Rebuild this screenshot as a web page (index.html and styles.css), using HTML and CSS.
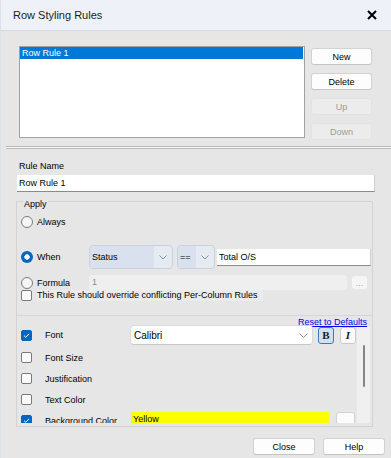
FILE: index.html
```html
<!DOCTYPE html>
<html lang="en">
<head>
  <meta charset="UTF-8">
  <title>Row Styling Rules</title>
  <link rel="stylesheet" href="styles.css">
</head>
<body>

  <div class="dialog">
    <div class="titlebar">
      <span class="title">Row Styling Rules</span>
      <svg class="close-x" width="10" height="10" viewBox="0 0 10 10"><path d="M1 1 L9 9 M9 1 L1 9" stroke="#000" stroke-width="2"/></svg>
    </div>

    <div class="rules-top">
      <div class="rule-list">
        <div class="rule-item selected">Row Rule 1</div>
      </div>
      <div class="rule-buttons">
        <button class="btn">New</button>
        <button class="btn">Delete</button>
        <button class="btn" disabled>Up</button>
        <button class="btn" disabled>Down</button>
      </div>
    </div>

    <div class="splitter"></div>

    <div class="editor">
      <div class="field-label">Rule Name</div>
      <input class="text-input name-input" value="Row Rule 1">

      <div class="group">
        <div class="group-title">Apply</div>

        <div class="apply-row always-row">
          <span class="radio"></span><span class="opt-label">Always</span>
        </div>

        <div class="apply-row when-row">
          <span class="radio checked"></span><span class="opt-label">When</span>
          <div class="combo combo-field">
            <span class="combo-text">Status</span>
            <span class="combo-arrow"><svg width="8" height="5" viewBox="0 0 8 5"><path d="M0.5 0.5 L4 4 L7.5 0.5" stroke="#8793a6" fill="none"/></svg></span>
          </div>
          <div class="combo combo-op">
            <span class="combo-text">==</span>
            <span class="combo-arrow"><svg width="8" height="5" viewBox="0 0 8 5"><path d="M0.5 0.5 L4 4 L7.5 0.5" stroke="#8793a6" fill="none"/></svg></span>
          </div>
          <input class="text-input value-input" value="Total O/S">
        </div>

        <div class="apply-row formula-row">
          <span class="radio"></span><span class="opt-label">Formula</span>
          <div class="formula-input">1</div>
          <button class="ellipsis-btn">...</button>
        </div>

        <div class="apply-row override-row">
          <span class="checkbox"></span>
          <span class="override-label">This Rule should override conflicting Per-Column Rules</span>
        </div>

        <div class="styles-panel">
          <div class="reset-row"><a class="reset-link" href="#">Reset to Defaults</a></div>
          <div class="styles-scroll">
            <div class="style-rows">
              <div class="style-row font-row">
                <span class="checkbox checked"><svg width="9" height="9" viewBox="0 0 9 9"><path d="M2 4.6 L3.8 6.3 L7 2.8" stroke="#fff" fill="none"/></svg></span>
                <span class="style-label">Font</span>
                <div class="font-combo">
                  <span>Calibri</span>
                  <svg width="9" height="5" viewBox="0 0 9 5"><path d="M0.5 0.5 L4.5 4.5 L8.5 0.5" stroke="#9a9a9a" fill="none"/></svg>
                </div>
                <button class="style-btn bold-btn pressed">B</button>
                <button class="style-btn italic-btn">I</button>
              </div>
              <div class="style-row">
                <span class="checkbox"></span>
                <span class="style-label">Font Size</span>
              </div>
              <div class="style-row">
                <span class="checkbox"></span>
                <span class="style-label">Justification</span>
              </div>
              <div class="style-row">
                <span class="checkbox"></span>
                <span class="style-label">Text Color</span>
              </div>
              <div class="style-row">
                <span class="checkbox checked"><svg width="9" height="9" viewBox="0 0 9 9"><path d="M2 4.6 L3.8 6.3 L7 2.8" stroke="#fff" fill="none"/></svg></span>
                <span class="style-label">Background Color</span>
                <div class="color-swatch">Yellow</div>
                <button class="swatch-btn"></button>
              </div>
            </div>
            <div class="scrollbar"><div class="thumb"></div></div>
          </div>
        </div>
      </div>
    </div>

    <div class="footer">
      <button class="btn wide">Close</button>
      <button class="btn wide">Help</button>
    </div>
  </div>

</body>
</html>
```

FILE: styles.css
```css
* {
  box-sizing: border-box;
}

body {
  margin: 0;
  font-family: "Liberation Sans", Arial, sans-serif;
  font-size: 9px;
  color: #000;
  background-color: #e6e6e6;
}

.dialog {
  width: 391px;
  height: 458px;
  background-color: #e6e6e6;
  border-left: 1px solid #dce2ea;
  display: flex;
  flex-direction: column;
}

.titlebar {
  height: 31px;
  flex: none;
  background-color: #eef2f8;
  border-bottom: 1px solid #d5d9df;
  display: flex;
  align-items: center;
  justify-content: space-between;
  padding: 0 14px 0 12px;
}

.title {
  font-size: 11px;
  color: #1b1b1b;
}

/* rule list */

.rules-top {
  display: flex;
  align-items: flex-start;
  padding: 15px 0 0 18px;
}

.rule-list {
  width: 286px;
  height: 92px;
  background-color: #fff;
  border: 1px solid #a2a2a2;
  padding-right: 1px;
}

.rule-item {
  height: 12px;
  line-height: 12px;
  padding-left: 2px;
}

.rule-item.selected {
  background-color: #0078d7;
  color: #fff;
}

.rule-buttons {
  display: flex;
  flex-direction: column;
  gap: 8px;
  margin-left: 6px;
  padding-top: 2px;
}

.btn {
  width: 61px;
  height: 17px;
  padding: 0;
  font-family: inherit;
  font-size: 9px;
  color: #000;
  background-color: #fdfdfd;
  border: 1px solid #d2d2d2;
  border-bottom-color: #c4c4c4;
  border-radius: 3px;
}

.btn:disabled {
  background-color: #ececec;
  border-color: #e2e2e2;
  color: #9c9c9c;
}

.btn.wide {
  width: 62px;
}

.splitter {
  margin: 6px 0 0 5px;
  height: 3px;
  border-top: 1px solid #b9b9b9;
  border-bottom: 1px solid #b9b9b9;
  background-color: #fafafa;
}

/* editor */

.editor {
  display: flex;
  flex-direction: column;
  padding: 0 0 0 15px;
}

.field-label {
  margin: 12px 0 0 3px;
  line-height: 11px;
}

.text-input {
  border: none;
  border-bottom: 1px solid #8a8a8a;
  border-right: 1px solid #cfcfcf;
  background-color: #fff;
  font-family: inherit;
  font-size: 9px;
  color: #000;
  padding: 0 2px;
  outline: none;
}

.name-input {
  margin: 3px 0 0 1px;
  width: 358px;
  height: 17px;
}

.group {
  margin-top: 9px;
  width: 357px;
  border: 1px solid #d3d3d3;
}

.group-title {
  margin: -3px 0 0 6px;
  padding: 0 1px;
  width: fit-content;
  line-height: 10px;
  background-color: #e6e6e6;
}

.apply-row {
  display: flex;
  align-items: center;
}

.always-row {
  height: 16px;
  margin-top: 5px;
}

.when-row {
  height: 24px;
  margin-top: 15px;
}

.formula-row {
  height: 15px;
  margin-top: 6px;
}

.override-row {
  height: 11px;
}

.radio {
  flex: none;
  width: 12px;
  height: 12px;
  margin-left: 4px;
  border: 1px solid #7b7b7b;
  border-radius: 50%;
  background-color: #f6f6f6;
}

.radio.checked {
  border: none;
  background: radial-gradient(circle, #fff 0 2.4px, #0067c0 3px);
}

.opt-label {
  margin-left: 4px;
  width: 52px;
}

.combo {
  display: flex;
  height: 24px;
  border: 1px solid #c8d1df;
  border-radius: 4px;
  background-color: #e6ebf2;
  overflow: hidden;
}

.combo-field {
  width: 84px;
}

.combo-op {
  width: 38px;
  margin-left: 4px;
}

.combo-text {
  flex: 1;
  display: flex;
  align-items: center;
  padding-left: 2px;
  background-color: #d9e1ee;
}

.combo-arrow {
  width: 18px;
  display: flex;
  align-items: center;
  justify-content: center;
}

.value-input {
  margin-left: 2px;
  width: 154px;
  height: 17px;
}

.formula-input {
  width: 258px;
  height: 15px;
  line-height: 15px;
  padding-left: 3px;
  border-radius: 3px;
  background-color: #efefef;
  color: #8c8c8c;
}

.ellipsis-btn {
  margin-left: 4px;
  width: 17px;
  height: 15px;
  padding: 0;
  font-family: inherit;
  font-size: 9px;
  color: #b09a9a;
  background-color: #f5f5f5;
  border: 1px solid #e6e6e6;
  border-radius: 3px;
}

.checkbox {
  flex: none;
  width: 11px;
  height: 11px;
  margin-left: 4px;
  border: 1px solid #7a7a7a;
  border-radius: 2px;
  background-color: #fbfbfb;
  display: flex;
  align-items: center;
  justify-content: center;
}

.checkbox.checked {
  background-color: #0067c0;
  border-color: #0067c0;
}

.override-label {
  margin-left: 5px;
  padding-right: 5px;
  height: 11px;
  line-height: 11px;
  background-color: #ebebeb;
}

/* styling list */

.styles-panel {
  margin-top: 14px;
  border-top: 1px solid #d6d6d6;
  padding-bottom: 3px;
}

.reset-row {
  display: flex;
  justify-content: flex-end;
  height: 10px;
  line-height: 10px;
  margin-top: 1px;
  padding-right: 5px;
}

.reset-link {
  color: #0000ee;
  text-decoration: underline;
}

.styles-scroll {
  display: flex;
  margin-top: -2px;
  height: 98px;
  overflow: hidden;
}

.style-rows {
  width: 340px;
  display: flex;
  flex-direction: column;
}

.style-row {
  flex: none;
  height: 21px;
  display: flex;
  align-items: center;
}

.style-row.font-row {
  height: 20px;
  margin-bottom: 2px;
}

.style-label {
  margin-left: 13px;
  width: 85px;
}

.font-combo {
  width: 183px;
  height: 20px;
  display: flex;
  align-items: center;
  justify-content: space-between;
  padding: 0 4px 0 3px;
  font-size: 10px;
  background-color: #fff;
  border: 1px solid #dcdcdc;
  border-bottom-color: #c8c8c8;
  border-radius: 4px;
}

.style-btn {
  width: 16px;
  height: 17px;
  padding: 0;
  font-family: "Liberation Serif", serif;
  font-size: 11px;
  font-weight: bold;
  color: #1a1a1a;
  background-color: #fbfbfb;
  border: 1px solid #cacaca;
  border-radius: 3px;
}

.bold-btn {
  margin-left: 5px;
}

.italic-btn {
  margin-left: 6px;
  font-style: italic;
}

.style-btn.pressed {
  background-color: #cfe1f3;
  border-color: #3d7ab8;
}

.color-swatch {
  margin-left: 1px;
  width: 198px;
  height: 18px;
  line-height: 14px;
  padding-left: 2px;
  background-color: #ffff00;
}

.swatch-btn {
  margin-left: 7px;
  width: 19px;
  height: 18px;
  background-color: #fbfbfb;
  border: 1px solid #d2d2d2;
  border-radius: 3px;
}

.scrollbar {
  width: 13px;
  margin-top: 2px;
  padding: 18px 0 0 6px;
  background-color: #f0f0f0;
}

.thumb {
  width: 2px;
  height: 42px;
  border-radius: 1px;
  background-color: #858585;
}

/* footer */

.footer {
  display: flex;
  justify-content: flex-end;
  gap: 8px;
  padding: 11px 6px 0 0;
}
```
